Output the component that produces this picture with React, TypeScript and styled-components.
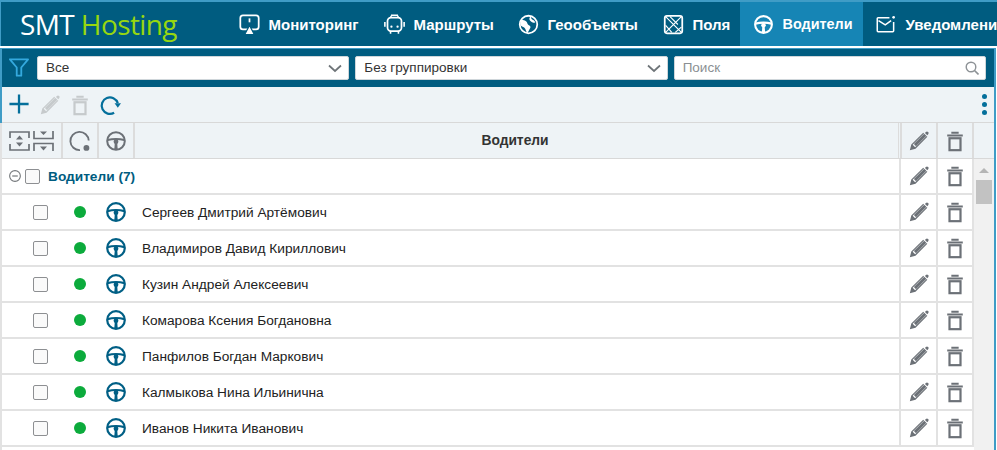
import React from "react";
import styled, { createGlobalStyle } from "styled-components";

const Global = createGlobalStyle`
  html, body { margin: 0; padding: 0; background: #fff; overflow: hidden; }
  body { font-family: "Liberation Sans", Arial, sans-serif; }
  * { box-sizing: border-box; }
`;
const Page = styled.div`
  width: 997px; height: 450px; overflow: hidden; display: flex; flex-direction: column;
`;
const Header = styled.header`
  height: 46px; flex: none; display: flex; align-items: stretch; overflow: hidden;
  background: #005c80; border-top: 2px solid #3f9cc6; border-left: 1px solid #3f9cc6;
  margin-bottom: 2px;
`;
const Logo = styled.div`
  width: 225px; flex: none; padding: 6px 0 0 19px; font: 400 28px/32px "Open Sans", sans-serif;
  letter-spacing: -0.6px; color: #fff; white-space: nowrap;
  span { color: #97d70f; }
`;
const NavItem = styled.a<{ $active?: boolean; $w: number }>`
  flex: none; width: ${p => p.$w}px; display: flex; align-items: center; gap: 8.5px; padding: 0 0 0 13px;
  background: ${p => (p.$active ? "#1685b5" : "transparent")};
  color: #fff; font: 700 ${p => (p.$active ? "14.4px" : "15px")} "Liberation Sans", sans-serif; white-space: nowrap;
  svg { flex: none; }
`;
const Panel = styled.main`
  flex: 1; min-height: 0; display: flex; flex-direction: column;
  border-left: 2px solid #3f9cc6; border-right: 2px solid #3f9cc6; border-top: 1px solid #3f9cc6; margin-right: 1px;
  background: #fff;
`;
const FilterBar = styled.div`
  height: 38px; flex: none; background: #005c80; display: flex; align-items: center; gap: 6px; padding: 0 8px 1px 7px;
`;
const FilterIcon = styled.div`
  width: 20px; height: 21px; margin-right: 2px; flex: none; display: flex;
`;
const Field = styled.div<{ $muted?: boolean }>`
  flex: 1; height: 24px; background: #fff; border-radius: 2px; border: 1px solid #cfd6da; display: flex; align-items: center;
  justify-content: space-between; padding: 0 6px 0 8px; font: 13.5px "Liberation Sans", sans-serif;
  color: ${p => (p.$muted ? "#8a8f93" : "#333")};
`;
const Toolbar = styled.div`
  height: 36px; flex: none; background: #eef3f6; display: flex; align-items: center; gap: 8px; padding: 0 7px 0 6px;
  border-bottom: 1px solid #d8d8d8;
`;
const Dots = styled.div`
  margin-left: auto; display: flex; flex-direction: column; gap: 3px;
  i { width: 5px; height: 5px; border-radius: 50%; background: #046f9b; display: block; }
`;
const TableWrap = styled.div`
  flex: 1; min-height: 0; display: flex; flex-direction: column; margin-left: -2px; border-left: 2px solid #e2e2e2;
`;
const HeadRow = styled.div`
  height: 36px; flex: none; display: grid; grid-template-columns: 61px 36px 36px 764px 39px 36px 1fr;
  background: #eef3f6; border-bottom: 1px solid #d8d8d8;
`;
const Body = styled.div`
  flex: 1; min-height: 0; display: flex;
`;
const Rows = styled.div`
  width: 972px; flex: none; background: #fff;
`;
const Row = styled.div`
  height: 36px; display: grid; border-bottom: 2px solid #e2e2e2;
  grid-template-columns: 899px 37px 36px;
  background: #fff;
`;
const ActionCell = styled.div`
  display: flex; align-items: center; justify-content: center; border-right: 2px solid #e2e2e2;
`;
const DriverCell = styled.div`
  display: flex; align-items: center; padding-left: 31px; border-right: 2px solid #e2e2e2;
  font: 13.7px "Liberation Sans", sans-serif; color: #222; white-space: nowrap;
`;
const HeadTitle = styled.div`
  display: flex; align-items: center; justify-content: center; border-right: 1px solid #dcdcdc;
  font: 700 13.8px "Liberation Sans", sans-serif; color: #333; padding-right: 3px;
`;
const HeadCell = styled.div`
  display: flex; align-items: center; justify-content: center; gap: 3px; border-right: 2px solid #dcdcdc;
`;
const HeadEdit = styled(HeadCell)`
  margin-left: 1px; border-left: 2px solid #dcdcdc;
`;
const GroupCell = styled.div`
  display: flex; align-items: center; padding-left: 7px; gap: 4px; border-right: 2px solid #e2e2e2;
`;
const GroupTitle = styled.span`
  margin-left: 4px; font: 700 13.7px "Liberation Sans", sans-serif; color: #005c80; white-space: nowrap;
`;
const Check = styled.span`
  width: 15px; height: 15px; flex: none; display: block; background: #fafafa; border: 1.5px solid #8d8f92; border-radius: 2px;
`;
const Dot = styled.span`
  width: 12px; height: 12px; flex: none; margin: 0 19px 0 26px; border-radius: 50%; background: #0cab3c; display: block;
`;
const Name = styled.span`
  margin-left: 15px;
`;
const Scroll = styled.div`
  flex: 1; background: #f1f1f1; display: flex; flex-direction: column; align-items: center; padding-top: 9px;
`;
const ScrollArrow = styled.div`
  width: 0; height: 0; border-left: 5px solid transparent; border-right: 5px solid transparent; border-bottom: 5px solid #b5b5b5;
`;
const ScrollThumb = styled.div`
  width: 16px; height: 24px; margin-top: 7px; background: #c2c2c2;
`;

const Ico: React.FC<{ s?: number; w?: number; h?: number; vb?: string; children: React.ReactNode }> = ({ s = 24, w, h, vb = "0 0 24 24", children }) => (
  <svg width={w ?? s} height={h ?? s} viewBox={vb} fill="none">{children}</svg>
);

const Wheel = ({ c = "#005f85", s = 22, sw = 2.4 }: { c?: string; s?: number; sw?: number }) => (
  <Ico s={s}>
    <circle cx="12" cy="12" r="9.600" stroke={c} strokeWidth={sw} />
    <path d="M2.800 11C6.500 10 9 9.800 12 9.800S17.500 10 21.200 11" stroke={c} strokeWidth={sw} />
    <circle cx="12" cy="12.800" r="2.600" fill={c} />
    <path d="M10.700 14h2.600l.6 7.500h-3.800z" fill={c} />
  </Ico>
);
const Pencil = ({ c = "#6c7177", s = 22 }: { c?: string; s?: number }) => (
  <Ico s={s}>
    <path d="M2 22l1.600-6.200L16.600 2.900l.9.9L5.100 16.200l2.700 2.700L20.200 6.500l.9.900L8.200 20.400 2 22z" fill={c} />
    <path d="M6.400 15.300L17.700 4l2.300 2.300L8.700 17.600z" fill={c} />
    <path d="M18.500 3.200l1-1a1.700 1.700 0 0 1 2.400 0l.1.100a1.700 1.700 0 0 1 0 2.400l-1 1z" fill={c} />
  </Ico>
);
const Trash = ({ c = "#6c7177", s = 22 }: { c?: string; s?: number }) => (
  <Ico s={s}>
    <path d="M8 3h8M3.500 6h17" stroke={c} strokeWidth="2" />
    <rect x="6" y="9" width="12" height="13" stroke={c} strokeWidth="2.400" />
  </Ico>
);

const navIcons = {
  mon: (
    <Ico s={21}>
      <rect x="1.500" y="1.500" width="21" height="16" rx="3" stroke="#fff" strokeWidth="2" />
      <path d="M12 13l5.500 10.500H6.500z" fill="#fff" stroke="#005c80" strokeWidth="1.400" />
      <path d="M12 5v4.500" stroke="#fff" strokeWidth="2" />
    </Ico>
  ),
  route: (
    <Ico s={21}>
      <rect x="4" y="4" width="16" height="15.500" rx="4" stroke="#fff" strokeWidth="2" />
      <path d="M8 1.500h8M8 4v-2M16 4v-2M7.500 19.500v3M16.500 19.500v3M1 9v5.500M23 9v5.500" stroke="#fff" strokeWidth="1.800" />
      <circle cx="8.500" cy="14.500" r="1.300" fill="#fff" /><circle cx="15.500" cy="14.500" r="1.300" fill="#fff" />
    </Ico>
  ),
  geo: (
    <Ico s={21}>
      <circle cx="12" cy="12" r="10" stroke="#fff" strokeWidth="2" />
      <path d="M4 6.500c2 .5 4 .5 5.500 2s1 3 2.500 4 3 1.500 2 3.500-2.500 4-3 6c-2-2-2-4-3-5.500s-3-1.500-4.500-3-1-4.500.5-7zM15 3c0 2 .5 3 2 3.500s1.500 2 3 2.500c-1 1-2.500 1.500-4 .5s-3-2-3-4 1-2 2-2.500z" fill="#fff" />
    </Ico>
  ),
  field: (
    <Ico s={21}>
      <rect x="2" y="2" width="20" height="20" rx="2.500" stroke="#fff" strokeWidth="2" />
      <path d="M3 3l18 18M21 3L3 21M8 3l9 9M3 13l7 8M14 21l7-6" stroke="#fff" strokeWidth="1.300" />
    </Ico>
  ),
  wheel: <Wheel c="#fff" s={21} sw={2.400} />,
  note: (
    <Ico s={21} vb="0 0 25 25">
      <path d="M16 4.500H2.500a1 1 0 0 0-1 1V20a1 1 0 0 0 1 1H20a1 1 0 0 0 1-1V9.500" stroke="#fff" strokeWidth="1.800" />
      <path d="M3 8l8 5 7-5" stroke="#fff" strokeWidth="1.800" />
      <circle cx="21" cy="4" r="1.600" fill="#fff" />
    </Ico>
  ),
};

const nav = [
  { t: "Мониторинг", w: 145, i: navIcons.mon },
  { t: "Маршруты", w: 134, i: navIcons.route },
  { t: "Геообъекты", w: 145, i: navIcons.geo },
  { t: "Поля", w: 90, i: navIcons.field },
  { t: "Водители", w: 123, i: navIcons.wheel, active: true },
  { t: "Уведомления", w: 160, i: navIcons.note },
];
const drivers = [
  "Сергеев Дмитрий Артёмович",
  "Владимиров Давид Кириллович",
  "Кузин Андрей Алексеевич",
  "Комарова Ксения Богдановна",
  "Панфилов Богдан Маркович",
  "Калмыкова Нина Ильинична",
  "Иванов Никита Иванович",
];
const Chevron = () => (
  <Ico s={14} vb="0 0 14 14"><path d="M1 4.500L7 10l6-5.500" stroke="#6e7478" strokeWidth="1.700" /></Ico>
);

export default function App() {
  return (
    <Page>
      <Global />
      <Header>
        <Logo>SMT <span>Hosting</span></Logo>
        {nav.map(n => (
          <NavItem key={n.t} $w={n.w} $active={n.active}>{n.i}{n.t}</NavItem>
        ))}
      </Header>
      <Panel>
        <FilterBar>
          <FilterIcon>
            <Ico w={20} h={21} vb="1 2 22 20"><path d="M2 3h20l-7.500 9v9h-5v-9z" stroke="#34a9de" strokeWidth="2" strokeLinejoin="round" /></Ico>
          </FilterIcon>
          <Field>Все<Chevron /></Field>
          <Field>Без группировки<Chevron /></Field>
          <Field $muted>Поиск
            <Ico s={14} vb="0 0 14 14"><circle cx="6" cy="6" r="4.800" stroke="#8d9296" strokeWidth="1.400" /><path d="M9.500 9.500l4 4" stroke="#8d9296" strokeWidth="1.600" /></Ico>
          </Field>
        </FilterBar>
        <Toolbar>
          <Ico s={23}><path d="M11.500 1.500v20M1.500 11.500h20" stroke="#046f9b" strokeWidth="2.400" /></Ico>
          <Pencil c="#c6cacc" s={22} />
          <Trash c="#c6cacc" s={22} />
          <Ico s={22}>
            <path d="M16.500 20.500A9 9 0 1 1 20.500 10" stroke="#046f9b" strokeWidth="2.400" />
            <path d="M17 10h7l-3.500 5z" fill="#046f9b" />
          </Ico>
          <Dots><i /><i /><i /></Dots>
        </Toolbar>
        <TableWrap>
          <HeadRow>
            <HeadCell>
              <Ico w={21} h={20} vb="0 0 21 20">
                <path d="M1 7V1h19v6M1 13v6h19v-6" stroke="#6c7177" strokeWidth="1.700" />
                <path d="M7 8.500l3.500-4 3.500 4zM7 11.500l3.500 4 3.500-4z" fill="#6c7177" />
              </Ico>
              <Ico w={21} h={20} vb="0 0 21 20">
                <path d="M1 0v7.500h19V0M1 20v-7.500h19V20" stroke="#6c7177" strokeWidth="1.700" />
                <path d="M7 0.500l3.500 3.500 3.500-3.500zM7 15.500l3.500 4 3.500-4z" fill="#6c7177" />
              </Ico>
            </HeadCell>
            <HeadCell>
              <Ico s={22}>
                <path d="M21.500 11.500A10 10 0 1 0 12 22" stroke="#6c7177" strokeWidth="2" />
                <circle cx="19" cy="19.500" r="3.200" fill="#6c7177" />
              </Ico>
            </HeadCell>
            <HeadCell><Wheel c="#6c7177" s={22} sw={2.200} /></HeadCell>
            <HeadTitle>Водители</HeadTitle>
            <HeadEdit><Pencil /></HeadEdit>
            <HeadCell><Trash /></HeadCell>
            <div />
          </HeadRow>
          <Body>
            <Rows>
              <Row>
                <GroupCell>
                  <Ico s={12} vb="0 0 13 13"><circle cx="6.500" cy="6.500" r="5.800" stroke="#74787b" strokeWidth="1.200" /><path d="M3.500 6.500h6" stroke="#74787b" strokeWidth="1.300" /></Ico>
                  <Check />
                  <GroupTitle>Водители (7)</GroupTitle>
                </GroupCell>
                <ActionCell><Pencil /></ActionCell>
                <ActionCell><Trash /></ActionCell>
              </Row>
              {drivers.map(d => (
                <Row key={d}>
                  <DriverCell>
                    <Check />
                    <Dot />
                    <Wheel />
                    <Name>{d}</Name>
                  </DriverCell>
                  <ActionCell><Pencil /></ActionCell>
                  <ActionCell><Trash /></ActionCell>
                </Row>
              ))}
            </Rows>
            <Scroll><ScrollArrow /><ScrollThumb /></Scroll>
          </Body>
        </TableWrap>
      </Panel>
    </Page>
  );
}
